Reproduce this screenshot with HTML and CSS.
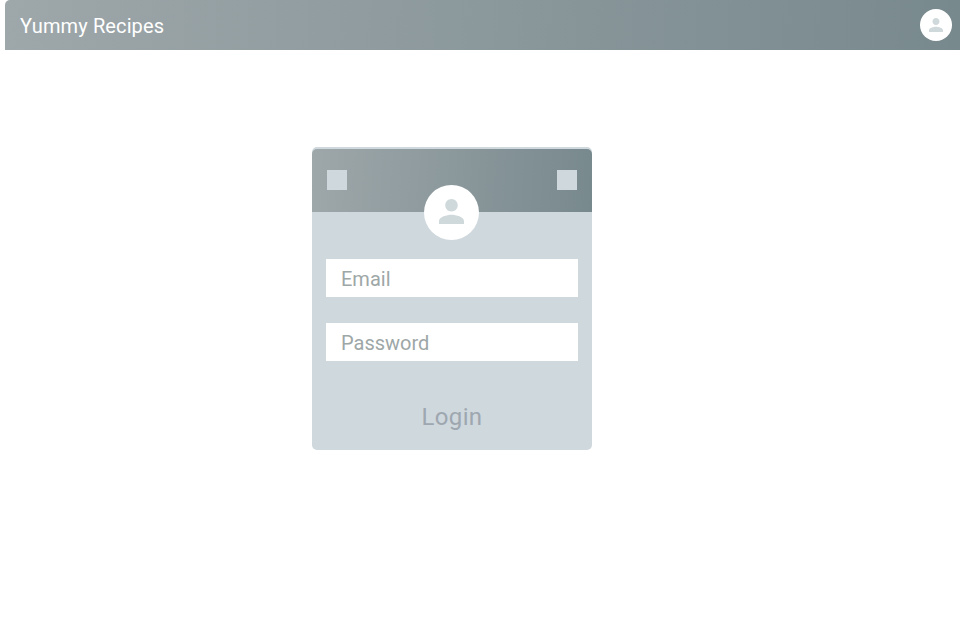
FILE: index.html
```
<!DOCTYPE html>
<html lang="en">
<head>
<meta charset="utf-8">
<title>Yummy Recipes</title>
<link rel="stylesheet" href="styles.css">
</head>
<body>
<header class="navbar">
  <h1 class="brand">Yummy Recipes</h1>
  <span class="avatar avatar-small">
    <svg viewBox="4 4 16 16"><path d="M12 12c2.2 0 4-1.8 4-4s-1.8-4-4-4-4 1.8-4 4 1.8 4 4 4zm0 2c-2.7 0-8 1.35-8 4v2h16v-2c0-2.65-5.3-4-8-4z"/></svg>
  </span>
</header>
<form class="card">
  <div class="card-header">
    <span class="square"></span>
    <span class="square"></span>
    <span class="avatar avatar-large">
      <svg viewBox="4 4 16 16"><path d="M12 12c2.2 0 4-1.8 4-4s-1.8-4-4-4-4 1.8-4 4 1.8 4 4 4zm0 2c-2.7 0-8 1.35-8 4v2h16v-2c0-2.65-5.3-4-8-4z"/></svg>
    </span>
  </div>
  <div class="fields">
    <input class="field" type="text" placeholder="Email">
    <input class="field" type="password" placeholder="Password">
    <button class="login" type="button">Login</button>
  </div>
</form>
</body>
</html>
```
FILE: styles.css
```
* { box-sizing: border-box; }

body {
  margin: 0;
  background: #fff;
  font-family: Roboto, sans-serif;
  overflow: hidden;
}

.navbar {
  display: flex;
  align-items: center;
  justify-content: space-between;
  height: 50px;
  margin-left: 5px;
  padding: 0 8px 0 15px;
  border-radius: 5px 0 0 0;
  background: linear-gradient(93deg, #9ea7aa, #78898e);
}

.brand {
  margin: 0;
  padding-top: 2px;
  color: #fff;
  font-size: 20px;
  font-weight: 400;
  line-height: 24px;
  letter-spacing: 0.12px;
}

.avatar {
  display: flex;
  align-items: center;
  justify-content: center;
  border-radius: 50%;
  background: #fff;
}

.avatar svg { display: block; fill: #cfd8da; }

.avatar-small { width: 32px; height: 32px; }
.avatar-small svg { width: 14px; height: 14px; }

.card {
  width: 280px;
  height: 303px;
  margin: 97px 0 0 312px;
  padding-top: 2px;
  border-radius: 5px;
  background: #cfd8dd;
}

.card-header {
  position: relative;
  display: flex;
  justify-content: space-between;
  height: 63px;
  padding: 21px 15px 0;
  border-radius: 5px 5px 0 0;
  background: linear-gradient(93deg, #9ea7aa, #78898e);
}

.square {
  width: 20px;
  height: 20px;
  background: #cfd8dd;
}

.avatar-large {
  position: absolute;
  left: 112px;
  top: 36px;
  width: 55px;
  height: 55px;
}
.avatar-large svg { width: 25px; height: 25px; margin-top: -3px; }

.fields {
  display: flex;
  flex-direction: column;
  gap: 26px;
  padding: 47px 14px 0;
}

.field {
  width: 100%;
  height: 38px;
  padding: 2px 15px 0;
  border: 0;
  outline: 0;
  background: #fff;
  font: 20px Roboto, sans-serif;
}

.field::placeholder { color: #9ea7a7; opacity: 1; }

.login {
  align-self: center;
  height: 32px;
  margin-top: 14px;
  padding: 0;
  border: 0;
  background: none;
  color: #9ea7b0;
  font: 24px/32px Roboto, sans-serif;
  letter-spacing: 0.35px;
}
```
